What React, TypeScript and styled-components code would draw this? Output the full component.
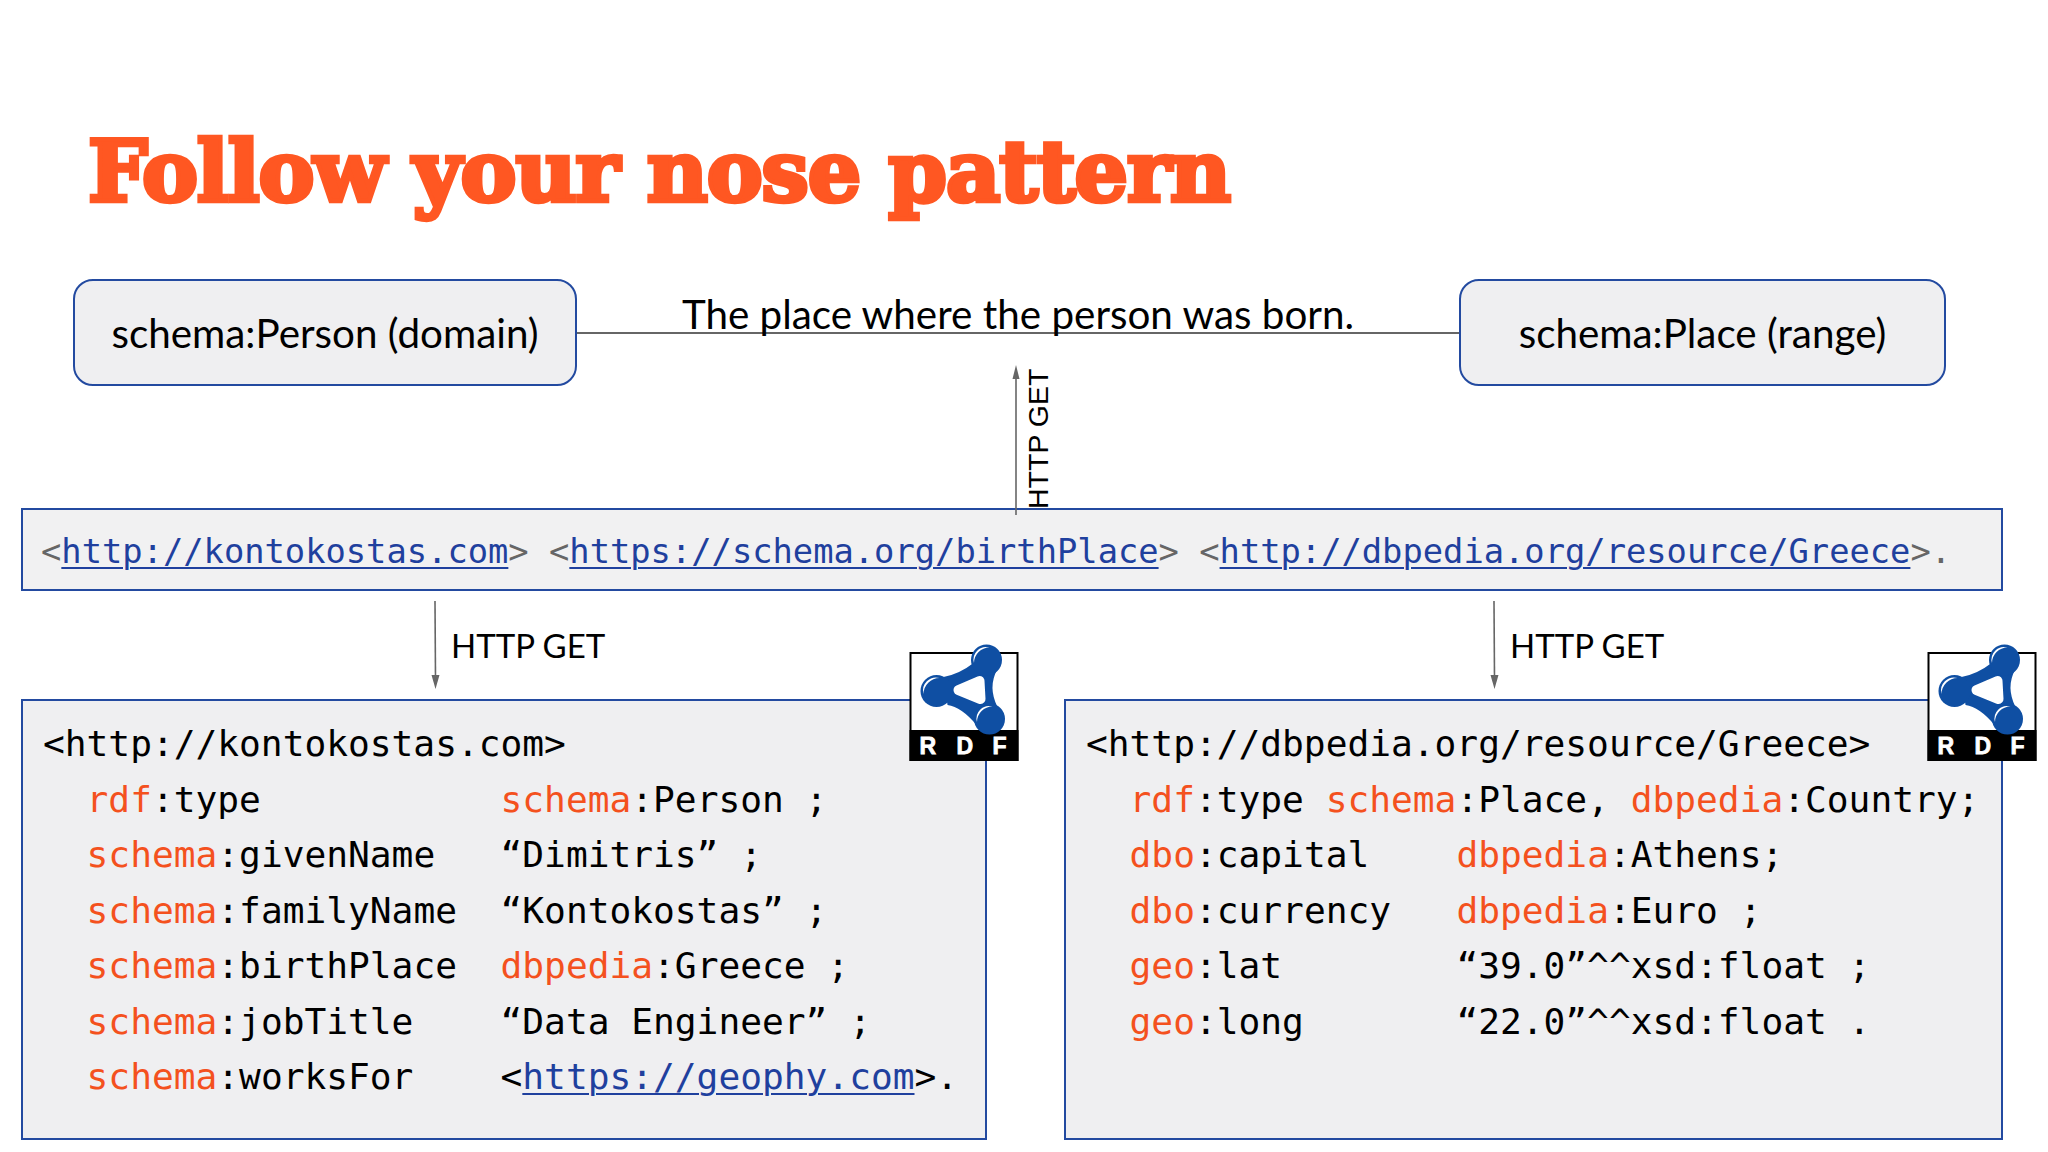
import React from 'react';
import styled, { createGlobalStyle } from 'styled-components';

const GlobalStyle = createGlobalStyle`
  html, body {
    margin: 0;
    padding: 0;
    background: #fff;
  }
`;

const Slide = styled.main`
  width: 2048px;
  height: 1152px;
  box-sizing: border-box;
  padding: 120px 45px 0 21px;
  overflow: hidden;
  background: #fff;
  color: #000;
  font-family: Lato, 'Liberation Sans', sans-serif;
`;

const Title = styled.h1`
  margin: 0 0 56px 67px;
  height: 103px;
  font-family: 'DejaVu Serif', serif;
  font-size: 84px;
  line-height: 103px;
  font-weight: 700;
  letter-spacing: -1.1px;
  color: #ff5722;
  -webkit-text-stroke: 4.5px #ff5722;
  white-space: nowrap;
`;

const PropertyRow = styled.div`
  display: flex;
  align-items: center;
  padding: 0 57px 0 52px;
`;

const ClassBox = styled.div<{ $width: number }>`
  box-sizing: border-box;
  width: ${(p) => p.$width}px;
  height: 107px;
  display: flex;
  align-items: center;
  justify-content: center;
  background: #efeff1;
  border: 2px solid #234aa0;
  border-radius: 20px;
  font-size: 40.4px;
`;

const Connector = styled.div`
  flex: 1;
  height: 2px;
  background: #666;
  display: flex;
  justify-content: center;
  align-items: flex-end;
`;

const ConnectorLabel = styled.span`
  font-size: 40.4px;
  line-height: 46px;
  margin: 0 0 -3px 0;
  white-space: nowrap;
`;

const UpLink = styled.div`
  display: flex;
  height: 122px;
  padding-left: 989px;
`;

const UpArrow = styled.svg`
  width: 12px;
  height: 150px;
  margin-top: -21px;
  position: relative;
  z-index: 1;
`;

const UpLabel = styled.span`
  writing-mode: vertical-rl;
  transform: rotate(180deg);
  font-family: 'Liberation Sans', sans-serif;
  font-size: 28.5px;
  line-height: 36px;
  height: 142px;
  margin: -19px 0 0 -2px;
  white-space: nowrap;
`;

const CodeBox = styled.div`
  box-sizing: border-box;
  height: 83px;
  padding: 3px 18px 0;
  display: flex;
  align-items: center;
  background: #f1f1f2;
  border: 2px solid #234aa0;
  font-family: 'DejaVu Sans Mono', monospace;
  font-size: 33.75px;
  color: #666;
  white-space: pre;
`;

const Link = styled.span`
  color: #1f409e;
  text-decoration: underline;
  text-decoration-thickness: 2px;
  text-underline-offset: 4px;
`;

const GetRow = styled.div`
  display: grid;
  grid-template-columns: 966px 939px;
  column-gap: 77px;
  height: 108px;
`;

const GetCell = styled.div<{ $offset: number }>`
  display: flex;
  padding: 10px 0 0 ${(p) => p.$offset}px;
  gap: 10px;
`;

const DownArrow = styled.svg`
  width: 12px;
  height: 88px;
`;

const GetLabel = styled.span`
  font-size: 33px;
  line-height: 40px;
  margin-top: 24px;
`;

const PanelRow = styled.div`
  display: grid;
  grid-template-columns: 966px 939px;
  column-gap: 77px;
`;

const Panel = styled.section`
  position: relative;
  box-sizing: border-box;
  height: 441px;
  padding: 15px 20px 0;
  background: #efeff1;
  border: 2px solid #234aa0;
  font-family: 'DejaVu Sans Mono', monospace;
  font-size: 36.2px;
  line-height: 55.5px;
  white-space: pre;
`;

const Line = styled.div`
  height: 55.5px;
`;

const Prefix = styled.span`
  color: #f4511e;
`;

const Badge = styled.svg<{ $right: number }>`
  position: absolute;
  top: -60px;
  right: ${(p) => p.$right}px;
  width: 110px;
  height: 120px;
`;

function RdfLogo({ right }: { right: number }) {
  const nodes = [
    { x: 77, y: 19, r: 15.5 },
    { x: 27, y: 50, r: 16 },
    { x: 80, y: 78, r: 15.5 },
  ];
  return (
    <Badge $right={right} viewBox="0 0 109 120">
      <rect x="1" y="12" width="107" height="107" fill="#fff" stroke="#000" strokeWidth="2" />
      <rect x="0" y="89" width="109" height="31" fill="#000" />
      <path d="M64 22 Q50 33 34 36 L38 64 Q52 66 67 84 L88 66 Q78 46 88 28 Z" fill="#0f4fa3" />
      <path d="M49 49 L70 40 L71 58 Z" fill="#fff" stroke="#fff" strokeWidth="10" strokeLinejoin="round" />
      {nodes.map((n) => {
        const R = n.r - 3;
        return (
          <g key={n.x}>
            <circle cx={n.x} cy={n.y} r={n.r} fill="#0f4fa3" />
            <path
              d={`M${n.x - R} ${n.y + 3} A${R} ${R} 0 0 1 ${n.x + 3} ${n.y - R} A${R * 1.25} ${R * 1.25} 0 0 0 ${n.x - R} ${n.y + 3} Z`}
              fill="#fff"
            />
          </g>
        );
      })}
      <g fontFamily="'Liberation Sans', sans-serif" fontWeight="700" fontSize="23" fill="#fff" stroke="#fff" strokeWidth="0.8">
        <text x="10" y="113">R</text>
        <text x="47" y="113">D</text>
        <text x="83" y="113">F</text>
      </g>
    </Badge>
  );
}

function ArrowDown() {
  return (
    <DownArrow viewBox="0 0 12 88">
      <line x1="6" y1="0" x2="6.5" y2="78" stroke="#666" strokeWidth="1.6" />
      <path d="M2.5 74 L10.5 74 L6.5 88 Z" fill="#666" />
    </DownArrow>
  );
}

export default function App() {
  return (
    <Slide>
      <GlobalStyle />
      <Title>Follow your nose pattern</Title>
      <PropertyRow>
        <ClassBox $width={504}>schema:Person (domain)</ClassBox>
        <Connector>
          <ConnectorLabel>The place where the person was born.</ConnectorLabel>
        </Connector>
        <ClassBox $width={487}>schema:Place (range)</ClassBox>
      </PropertyRow>
      <UpLink>
        <UpArrow viewBox="0 0 12 150">
          <line x1="6" y1="10" x2="6" y2="150" stroke="#666" strokeWidth="1.6" />
          <path d="M2.5 14 L9.5 14 L6 0 Z" fill="#666" />
        </UpArrow>
        <UpLabel>HTTP GET</UpLabel>
      </UpLink>
      <CodeBox>
        {'<'}
        <Link>http://kontokostas.com</Link>
        {'> <'}
        <Link>https://schema.org/birthPlace</Link>
        {'> <'}
        <Link>http://dbpedia.org/resource/Greece</Link>
        {'>.'}
      </CodeBox>
      <GetRow>
        <GetCell $offset={408}>
          <ArrowDown />
          <GetLabel>HTTP GET</GetLabel>
        </GetCell>
        <GetCell $offset={424}>
          <ArrowDown />
          <GetLabel>HTTP GET</GetLabel>
        </GetCell>
      </GetRow>
      <PanelRow>
        <Panel>
          <RdfLogo right={-34} />
          <Line>{'<http://kontokostas.com>'}</Line>
          <Line>{'  '}<Prefix>rdf</Prefix>{':type           '}<Prefix>schema</Prefix>{':Person ;'}</Line>
          <Line>{'  '}<Prefix>schema</Prefix>{':givenName   “Dimitris” ;'}</Line>
          <Line>{'  '}<Prefix>schema</Prefix>{':familyName  “Kontokostas” ;'}</Line>
          <Line>{'  '}<Prefix>schema</Prefix>{':birthPlace  '}<Prefix>dbpedia</Prefix>{':Greece ;'}</Line>
          <Line>{'  '}<Prefix>schema</Prefix>{':jobTitle    “Data Engineer” ;'}</Line>
          <Line>{'  '}<Prefix>schema</Prefix>{':worksFor    <'}<Link>https://geophy.com</Link>{'>.'}</Line>
        </Panel>
        <Panel>
          <RdfLogo right={-36} />
          <Line>{'<http://dbpedia.org/resource/Greece>'}</Line>
          <Line>{'  '}<Prefix>rdf</Prefix>{':type '}<Prefix>schema</Prefix>{':Place, '}<Prefix>dbpedia</Prefix>{':Country;'}</Line>
          <Line>{'  '}<Prefix>dbo</Prefix>{':capital    '}<Prefix>dbpedia</Prefix>{':Athens;'}</Line>
          <Line>{'  '}<Prefix>dbo</Prefix>{':currency   '}<Prefix>dbpedia</Prefix>{':Euro ;'}</Line>
          <Line>{'  '}<Prefix>geo</Prefix>{':lat        “39.0”^^xsd:float ;'}</Line>
          <Line>{'  '}<Prefix>geo</Prefix>{':long       “22.0”^^xsd:float .'}</Line>
        </Panel>
      </PanelRow>
    </Slide>
  );
}
